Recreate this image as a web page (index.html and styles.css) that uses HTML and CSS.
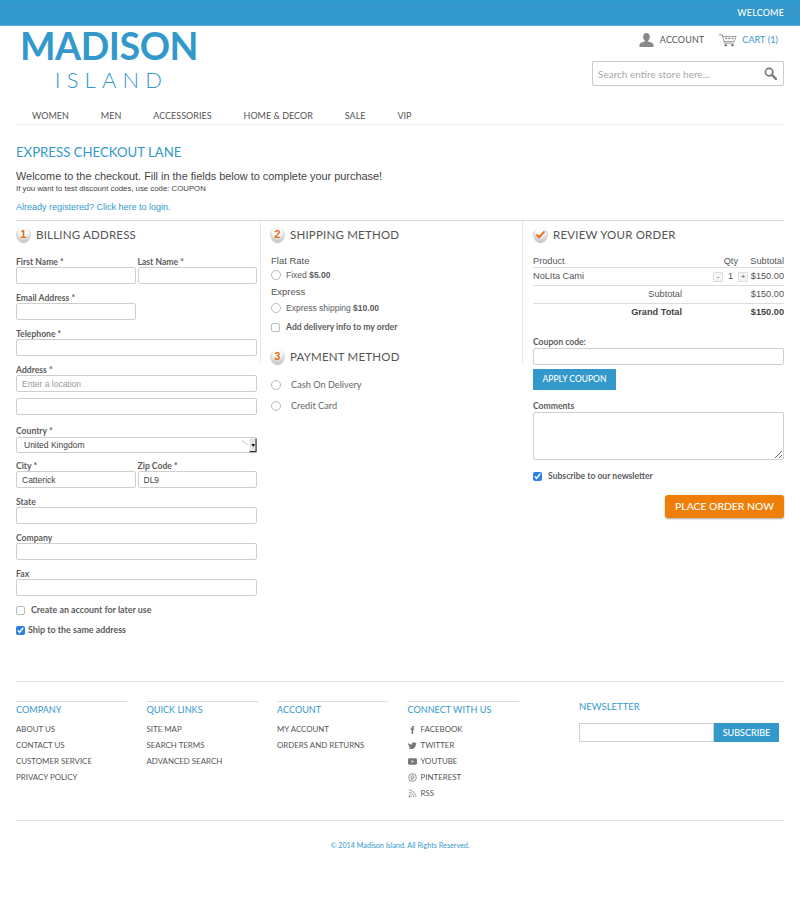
FILE: index.html
```html
<!DOCTYPE html>
<html lang="en">
<head>
<meta charset="utf-8">
<title>Express Checkout Lane</title>
<link rel="stylesheet" href="styles.css">
</head>
<body>
<div class="topbar"><span>WELCOME</span></div>
<div class="page">
  <header class="header">
    <div class="logo">
      <div class="logo-main">MADISON</div>
      <div class="logo-sub">ISLAND</div>
    </div>
    <div class="header-right">
      <div class="account-row">
        <a class="acct">
          <svg class="icon-user" viewBox="0 0 16 15"><path fill="#8a8a8a" d="M8 0c2.200 0 3.600 1.700 3.600 3.900 0 1.700-.8 3.200-1.700 4.100v1.200c1.800.7 5 1.200 5.600 3v2.800H.5v-2.800c.6-1.800 3.800-2.300 5.600-3V8C5.200 7.100 4.400 5.600 4.400 3.900 4.400 1.700 5.800 0 8 0z"/></svg>
          ACCOUNT
        </a>
        <a class="cart">
          <svg class="icon-cart" viewBox="0 0 20 14"><g fill="none" stroke="#777" stroke-width=".8"><path d="M0 .6h3.500l2.700 9.400h10.300"/><path d="M4 2.500h15l-2 5.700H5.600"/></g><g fill="#777"><circle cx="7.500" cy="12.300" r="1.300"/><circle cx="15" cy="12.300" r="1.300"/><rect x="7" y="4" width="2" height="1.500"/><rect x="10.500" y="4" width="2" height="1.500"/><rect x="14" y="4" width="2" height="1.500"/></g></svg>
          CART (1)
        </a>
      </div>
      <div class="search">
        <span class="search-text">Search entire store here...</span>
        <svg class="icon-search" viewBox="0 0 14 14"><circle cx="5.500" cy="5.500" r="4" fill="none" stroke="#777" stroke-width="1.800"/><path d="M8.500 8.500l4.300 4.300" stroke="#777" stroke-width="2.400" stroke-linecap="round"/></svg>
      </div>
    </div>
  </header>

  <nav class="nav">
    <a>WOMEN</a><a>MEN</a><a>ACCESSORIES</a><a>HOME &amp; DECOR</a><a>SALE</a><a>VIP</a>
  </nav>

  <h1 class="title">EXPRESS CHECKOUT LANE</h1>
  <p class="welcome">Welcome to the checkout. Fill in the fields below to complete your purchase!</p>
  <p class="hint">If you want to test discount codes, use code: COUPON</p>
  <p class="login"><a>Already registered? Click here to login.</a></p>

  <main class="columns">
    <section class="col col-billing">
      <h2 class="step"><span class="badge">1</span>BILLING ADDRESS</h2>
      <div class="fields">
        <div class="row">
          <label class="field half"><span>First Name *</span><input type="text"></label>
          <label class="field half"><span>Last Name *</span><input type="text"></label>
        </div>
        <div class="row">
          <label class="field half"><span>Email Address *</span><input type="text"></label>
        </div>
        <label class="field"><span>Telephone *</span><input type="text"></label>
        <label class="field field-address"><span>Address *</span><input type="text" placeholder="Enter a location"><input class="second" type="text"></label>
        <label class="field field-country"><span>Country *</span>
          <span class="select-wrap">
            <select><option>United Kingdom</option></select>
            <svg class="select-arrow" viewBox="0 0 16 15"><path d="M0 2l6 5" stroke="#aaa" stroke-width=".8"/><path d="M8 0h8v15H8z" fill="#e4e4e4"/><path d="M15 0v14H8" fill="none" stroke="#333" stroke-width="1.200"/><path d="M10 6h4l-2 3z" fill="#111"/></svg>
          </span>
        </label>
        <div class="row">
          <label class="field half"><span>City *</span><input type="text" value="Catterick"></label>
          <label class="field half"><span>Zip Code *</span><input type="text" value="DL9"></label>
        </div>
        <label class="field"><span>State</span><input type="text"></label>
        <label class="field"><span>Company</span><input type="text"></label>
        <label class="field"><span>Fax</span><input type="text"></label>
      </div>
      <label class="check first-check"><input type="checkbox"><span class="gap-wide">Create an account for later use</span></label>
      <label class="check"><input type="checkbox" checked><span>Ship to the same address</span></label>
    </section>

    <section class="col col-shipping">
      <h2 class="step"><span class="badge">2</span>SHIPPING METHOD</h2>
      <div class="method-title">Flat Rate</div>
      <label class="radio"><input type="radio" name="ship"><span>Fixed <b>$5.00</b></span></label>
      <div class="method-title">Express</div>
      <label class="radio"><input type="radio" name="ship"><span>Express shipping <b>$10.00</b></span></label>
      <label class="check delivery"><input type="checkbox"><span class="gap-wide">Add delivery info to my order</span></label>
      <h2 class="step step-pay"><span class="badge">3</span>PAYMENT METHOD</h2>
      <label class="pay"><input type="radio" name="pay"><span>Cash On Delivery</span></label>
      <label class="pay"><input type="radio" name="pay"><span>Credit Card</span></label>
    </section>

    <section class="col col-review">
      <h2 class="step"><span class="badge badge-check"><svg viewBox="0 0 12 10"><path d="M1.500 5l3 3 6-6.500" fill="none" stroke="#e8701a" stroke-width="2.200"/></svg></span>REVIEW YOUR ORDER</h2>
      <table class="order">
        <thead><tr><th class="product">Product</th><th class="qty">Qty</th><th class="price">Subtotal</th></tr></thead>
        <tbody>
          <tr><td class="product">NoLIta Cami</td><td class="qty"><span class="qbtn">-</span><span class="qnum">1</span><span class="qbtn">+</span></td><td class="price">$150.00</td></tr>
          <tr><td colspan="2" class="sum">Subtotal</td><td class="price">$150.00</td></tr>
          <tr class="grand"><td colspan="2" class="sum">Grand Total</td><td class="price">$150.00</td></tr>
        </tbody>
      </table>
      <label class="field coupon"><span>Coupon code:</span><input type="text"></label>
      <button class="apply" type="button">APPLY COUPON</button>
      <label class="field comments"><span>Comments</span><textarea></textarea></label>
      <label class="check subscribe"><input type="checkbox" checked><span class="gap-wide">Subscribe to our newsletter</span></label>
      <div class="place-row"><button class="place" type="button">PLACE ORDER NOW</button></div>
    </section>
  </main>

  <footer class="footer">
    <div class="foot-cols">
      <div class="foot-col">
        <h3>COMPANY</h3>
        <a>ABOUT US</a><a>CONTACT US</a><a>CUSTOMER SERVICE</a><a>PRIVACY POLICY</a>
      </div>
      <div class="foot-col">
        <h3>QUICK LINKS</h3>
        <a>SITE MAP</a><a>SEARCH TERMS</a><a>ADVANCED SEARCH</a>
      </div>
      <div class="foot-col">
        <h3>ACCOUNT</h3>
        <a>MY ACCOUNT</a><a>ORDERS AND RETURNS</a>
      </div>
      <div class="foot-col social">
        <h3>CONNECT WITH US</h3>
        <a><svg viewBox="0 0 10 10"><path fill="#777" d="M4 10V5.500H3V4h1V3c0-1.200.6-2 2-2h1v1.500H6.300c-.5 0-.6.2-.6.6V4H7l-.2 1.500H5.700V10z"/></svg>FACEBOOK</a>
        <a><svg viewBox="0 0 10 10"><path fill="#777" d="M0 2c1.200 1.300 2.600 2 4.300 2.100C4.100 2.600 5 1.500 6.400 1.500c.7 0 1.200.3 1.600.7l1.300-.5-.7 1.100 1-.3-.9 1c0 3-2.200 5.500-5.300 5.500-1.100 0-2.300-.3-3.200-.9 1 .1 2-.2 2.700-.8-.9 0-1.700-.6-2-1.400h.9C.8 5.100.2 4.300.2 3.300l.9.300C.3 3.100 0 2.800 0 2z"/></svg>TWITTER</a>
        <a><svg viewBox="0 0 10 10"><rect y="1.500" width="10" height="7" rx="1.500" fill="#777"/><path d="M4 3.500l2.500 1.500L4 6.500z" fill="#fff"/></svg>YOUTUBE</a>
        <a><svg viewBox="0 0 10 10"><circle cx="5" cy="5" r="4.300" fill="none" stroke="#777" stroke-width=".9"/><circle cx="5" cy="4.600" r="1.700" fill="none" stroke="#777" stroke-width=".9"/><path d="M4.800 5l-.8 3.300" stroke="#777" stroke-width=".9"/></svg>PINTEREST</a>
        <a><svg viewBox="0 0 10 10"><g fill="none" stroke="#777" stroke-width=".8"><path d="M1 1.200c4.200 0 7.800 3.600 7.800 7.800"/><path d="M1 3.700c2.900 0 5.300 2.400 5.300 5.300"/><path d="M1 6.200c1.500 0 2.800 1.300 2.800 2.800"/></g><circle cx="1.500" cy="8.500" r=".9" fill="#777"/></svg>RSS</a>
      </div>
      <div class="newsletter">
        <h3>NEWSLETTER</h3>
        <div class="news-form"><input type="text"><button type="button">SUBSCRIBE</button></div>
      </div>
    </div>
    <div class="copyright">© 2014 Madison Island. All Rights Reserved.</div>
  </footer>
</div>
</body>
</html>
```

FILE: styles.css
```css
* { box-sizing: border-box; }
html, body { margin: 0; padding: 0; background: #fff; }
body { font-family: "Liberation Sans", Arial, sans-serif; color: #555; height: 902px; overflow: hidden; }
a { color: inherit; text-decoration: none; }
h1, h2, h3, p { margin: 0; font-weight: 400; }

.topbar { height: 26px; background: #3399cc; border-top: 1px solid #2a9fd8; border-bottom: 1px solid #5aaedb; color: #fff; font: 500 9px/24px Lato, sans-serif; text-align: right; padding-right: 16px; letter-spacing: .15px; }

.page { padding: 0 16px; }

.header { display: flex; justify-content: space-between; height: 76px; }
.logo { padding: 1px 0 0 4px; color: #3399cc; font-family: Lato, sans-serif; width: 182px; }
.logo-main { font-size: 37.600px; line-height: 38px; font-weight: 700; letter-spacing: -.45px; white-space: nowrap; }
.logo-sub { font-size: 22px; line-height: 22px; font-weight: 300; letter-spacing: 6.200px; text-align: center; padding: 4px 0 0 0; margin-left: 5px; }

.header-right { width: 192px; display: flex; flex-direction: column; align-items: flex-end; }
.account-row { display: flex; align-items: center; height: 26px; margin-top: 1px; font: 400 9px/12px Lato, sans-serif; padding-right: 6px; letter-spacing: .1px; }
.acct { display: flex; align-items: center; gap: 6px; color: #555; }
.cart { display: flex; align-items: center; gap: 5px; margin-left: 15px; color: #3399cc; }
.icon-user { width: 15px; height: 14px; }
.icon-cart { width: 18px; height: 13px; }
.search { width: 192px; height: 25px; margin-top: 8px; border: 1px solid #ccc; border-radius: 2px; box-shadow: 0 0 1px #ddd; display: flex; align-items: center; justify-content: space-between; padding: 0 6px 0 5px; }
.search-text { font: 400 10px Lato, sans-serif; color: #a8a8a8; }
.icon-search { width: 13px; height: 13px; }

.nav { display: flex; height: 23px; padding-left: 16px; gap: 32px; border-bottom: 1px solid #eee; font: 400 9px/28px Lato, sans-serif; color: #555; }

.title { font: 400 13.200px/16px Lato, sans-serif; color: #3399cc; margin-top: 19px; }
.welcome { font-size: 10.900px; line-height: 14px; margin-top: 9px; color: #444; }
.hint { font-size: 7.800px; line-height: 10px; margin-top: 1px; color: #444; }
.login { font-size: 9px; line-height: 12px; margin-top: 7px; color: #3399cc; }

.columns { display: grid; grid-template-columns: 245px 262px 261px; border-top: 1px solid #d9d9d9; margin-top: 7px; height: 461px; }
.col { height: 420px; background: linear-gradient(#e6e6e6, #e6e6e6) right top / 1px 142px no-repeat; }
.col-review { background: none; padding-left: 10px; }
.col-shipping { padding-left: 10px; }
.col-shipping .badge { margin-left: -1px; }
.col-billing { padding-right: 4px; }

.step { display: flex; align-items: center; gap: 5px; height: 27px; font: 400 11.500px/16px Lato, sans-serif; color: #555; letter-spacing: .2px; }
.badge { width: 15px; height: 15px; border-radius: 50%; background: radial-gradient(circle at 50% 30%, #fdfdfd 30%, #a9a9a9 100%); box-shadow: 0 2px 1px -1px #bbb; color: #ea6a10; font: 700 11px/15px "Liberation Sans", sans-serif; text-align: center; display: flex; align-items: center; justify-content: center; flex: none; }
.badge-check svg { width: 11px; height: 9px; }

.fields { display: flex; flex-direction: column; margin-top: 10px; }
.row { display: flex; gap: 2px; }
.field { display: block; flex: 1; }
.fields .field { margin-bottom: 10px; }
.row .field { margin-bottom: 10px; }
.fields .field-address { margin-bottom: 12px; }
.fields .field-country { margin-bottom: 9px; }
.fields > .field:last-child { margin-bottom: 8px; }
.field > span:first-child { display: block; font: 700 8.600px/12px Lato, sans-serif; color: #5c5c5c; height: 12px; }
.fields .field > span:first-child { line-height: 9px; height: 9px; }
.half { flex: 0 0 119.500px; }
input[type=text], textarea, select { display: block; width: 100%; height: 17px; border: 1px solid #cfcfcf; border-radius: 2px; background: #fff; padding: 0 5px; font: 400 8.500px "Liberation Sans", sans-serif; color: #444; margin: 0; outline: 0; }
input::placeholder { color: #999; opacity: 1; }
.second { margin-top: 6px !important; }
.fields .field-country > .select-wrap { display: block; position: relative; height: 16px; margin-top: 1px; }
select { appearance: none; height: 16px; padding-left: 7px; }
.select-arrow { position: absolute; right: 0; top: 1px; width: 15px; height: 15px; }

.check, .radio, .pay { display: flex; align-items: center; font: 700 8.600px/12px Lato, sans-serif; color: #5c5c5c; }
.col-billing .check { font-size: 8.900px; }
.check input { width: 9px; height: 9px; margin: 0 3px 0 0; accent-color: #2c7ee8; flex: none; }
.check input:not(:checked) { appearance: none; border: 1px solid #bbb; border-radius: 2px; background: #fff; }
.gap-wide { margin-left: 3px; }
.first-check { margin-top: 0; }
.check + .check { margin-top: 8px; }

.method-title { font-size: 9.500px; line-height: 12px; color: #555; margin-top: 3px; }
.step + .method-title { margin-top: 7px; }
.radio { margin-top: 2.500px; height: 16px; }
.step + .method-title + .radio { margin-top: -.5px; }
.radio input, .pay input { appearance: none; width: 10px; height: 10px; margin: 0 5px 0 0; flex: none; border: 1px solid #bbb; border-radius: 50%; background: #fff; }
.radio span { font-family: "Liberation Sans", sans-serif; font-size: 8.500px; font-weight: 400; }
.radio b { font-weight: 700; }
.col-shipping .check.delivery { margin-top: 3px; height: 16px; }
.step-pay { margin-top: 8px; }
.pay { font-weight: 400; font-size: 9.200px; height: 21px; margin-top: 0; color: #666; }
.pay input { margin-right: 10px; }
.step-pay + .pay { margin-top: 4px; }

.order { width: 100%; border-collapse: collapse; font-size: 9.200px; color: #555; margin-top: 4px; }
.order th { font-weight: 400; height: 15px; line-height: 12px; vertical-align: bottom; border-bottom: 1px solid #ddd; padding: 0; }
.order td { height: 18px; border-bottom: 1px solid #ddd; padding: 0; }
.order tr:last-child td { border-bottom: 0; }
.product { text-align: left; }
.qty { text-align: right; width: 60px; white-space: nowrap; }
.price { text-align: right; width: 36px; }
.sum { text-align: right; padding-right: 66px !important; }
.grand td { font-weight: 700; color: #444; }
.qbtn { display: inline-block; width: 10px; height: 10px; border: 1px solid #ddd; background: #f6f6f6; font-size: 8px; line-height: 8px; text-align: center; border-radius: 1px; }
.qnum { display: inline-block; width: 15px; text-align: center; }
.order th.qty { padding-right: 10px; }

.coupon { display: block; margin-top: 15px; }
.apply { display: block; margin-top: 4px; width: 83px; height: 21px; border: 0; background: #3399cc; color: #fff; font: 500 8.500px/21px Lato, sans-serif; padding: 0; }
.comments { display: block; margin-top: 10px; }
textarea { height: 48px; resize: both; }
.subscribe { margin-top: 10px; }
.place-row { display: flex; justify-content: flex-end; margin-top: 13px; }
.place { width: 119px; height: 23px; border: 0; border-radius: 3px; background: #f07f09; color: #fff; font: 500 10.400px/23px Lato, sans-serif; box-shadow: 0 1px 2px rgba(0,0,0,.35); padding: 0; }

.footer { border-top: 1px solid #e2e2e2; padding-top: 19px; }
.foot-cols { display: flex; height: 120px; border-bottom: 1px solid #e2e2e2; }
.foot-col { width: 111px; margin-right: 19.500px; }
.foot-col h3 { border-top: 1px solid #ddd; font: 400 9.100px/15px Lato, sans-serif; color: #3399cc; height: 20px; padding-top: 0; }
.foot-col a { display: flex; align-items: center; height: 16px; font: 400 7.900px/16px Lato, sans-serif; color: #555; }
.social svg { width: 9px; height: 9px; margin-right: 4px; flex: none; }
.newsletter { margin-left: 41px; width: 200px; }
.newsletter h3 { font: 400 9.500px/12px Lato, sans-serif; color: #3399cc; }
.news-form { display: flex; margin-top: 10px; height: 19px; }
.news-form input[type=text] { flex: 1; height: 19px; border-radius: 0; min-width: 0; }
.news-form button { width: 65px; height: 19px; border: 0; background: #3399cc; color: #fff; font: 500 9px/19px Lato, sans-serif; padding: 0; }
.copyright { text-align: center; font: 400 7.200px/10px Lato, sans-serif; color: #3399cc; margin-top: 20px; }
```
